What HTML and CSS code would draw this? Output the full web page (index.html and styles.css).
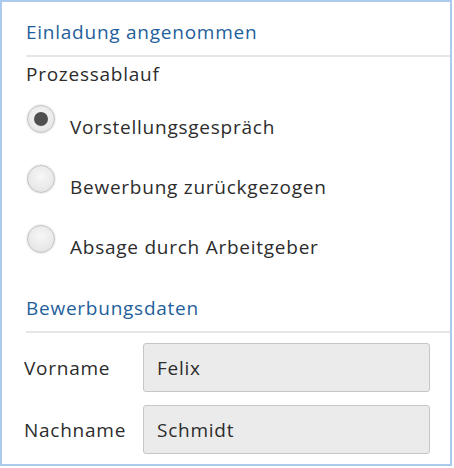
FILE: index.html
```html
<!DOCTYPE html>
<html lang="de">
<head>
<meta charset="utf-8">
<title>Einladung angenommen</title>
<link rel="stylesheet" href="styles.css">
</head>
<body>
<div class="frame">
  <h2 class="section-title">Einladung angenommen</h2>
  <div class="group-label">Prozessablauf</div>
  <div class="radio-list">
    <label class="radio-row">
      <span class="radio checked"></span>
      <span class="radio-text">Vorstellungsgespräch</span>
    </label>
    <label class="radio-row">
      <span class="radio"></span>
      <span class="radio-text">Bewerbung zurückgezogen</span>
    </label>
    <label class="radio-row">
      <span class="radio"></span>
      <span class="radio-text">Absage durch Arbeitgeber</span>
    </label>
  </div>
  <h2 class="section-title second">Bewerbungsdaten</h2>
  <div class="form">
    <div class="form-row">
      <span class="field-label">Vorname</span>
      <div class="field-input">Felix</div>
    </div>
    <div class="form-row">
      <span class="field-label">Nachname</span>
      <div class="field-input">Schmidt</div>
    </div>
  </div>
</div>
</body>
</html>
```

FILE: styles.css
```css
html, body {
  margin: 0;
  padding: 0;
  background: #ffffff;
}

body {
  font-family: "Open Sans", "Noto Sans", "Liberation Sans", sans-serif;
  font-size: 19px;
  line-height: 24px;
  letter-spacing: 0.75px;
  color: #2c2c2c;
}

.frame {
  box-sizing: border-box;
  width: 452px;
  height: 466px;
  border: 2px solid #abcbed;
  background: #ffffff;
  display: flex;
  flex-direction: column;
}

.section-title {
  margin: 0 0 0 24px;
  padding: 18px 0 11px 0;
  font-size: 19px;
  font-weight: normal;
  line-height: 24px;
  color: #1f5f9b;
  border-bottom: 2px solid #e6e6e6;
}

.section-title.second {
  margin-top: 11px;
  padding-top: 0;
}

.group-label {
  margin: 5px 0 0 24px;
}

.radio-list {
  margin-top: 19px;
  display: flex;
  flex-direction: column;
}

.radio-row {
  height: 60px;
  display: flex;
  align-items: flex-start;
  padding-left: 25px;
}

.radio {
  box-sizing: border-box;
  width: 28px;
  height: 28px;
  border-radius: 50%;
  border: 1px solid #c2c2c2;
  background: radial-gradient(circle at 50% 40%, #f7f7f7 0%, #e8e8e8 65%, #d9d9d9 100%);
  box-shadow: 0 0 2px rgba(0, 0, 0, 0.2);
  display: flex;
  align-items: center;
  justify-content: center;
  flex-shrink: 0;
}

.radio.checked::after {
  content: "";
  width: 14px;
  height: 14px;
  border-radius: 50%;
  background: #4f4f4f;
}

.radio-text {
  margin: 10px 0 0 15px;
}

.form {
  margin-top: 10px;
  display: flex;
  flex-direction: column;
  gap: 13px;
}

.form-row {
  display: flex;
  align-items: center;
  padding-left: 22px;
}

.field-label {
  width: 119px;
  flex-shrink: 0;
}

.field-input {
  box-sizing: border-box;
  width: 287px;
  height: 49px;
  padding-left: 13px;
  display: flex;
  align-items: center;
  background: #ebebeb;
  border: 1px solid #c6c6c6;
  border-radius: 3px;
  color: #2c2c2c;
}
```
